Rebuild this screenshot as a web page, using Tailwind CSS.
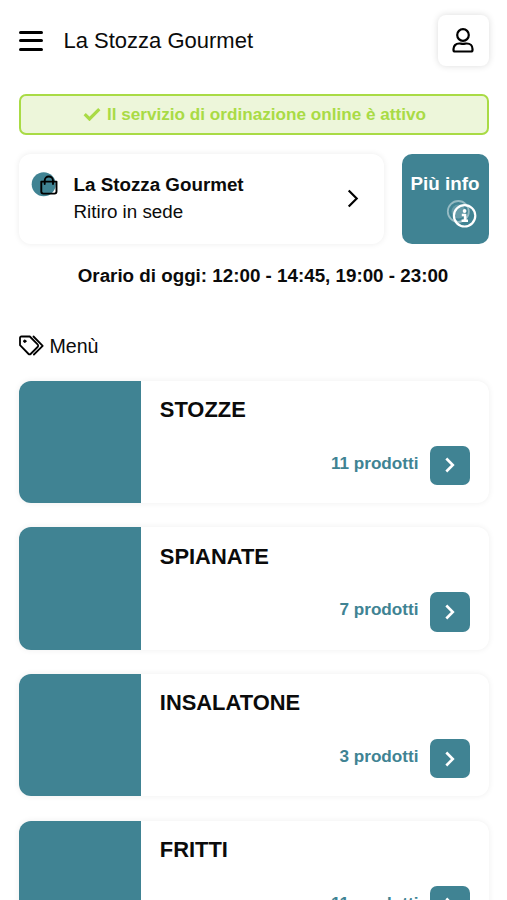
<!DOCTYPE html>
<html lang="it">
<head>
<meta charset="utf-8">
<meta name="viewport" content="width=device-width, initial-scale=1">
<title>La Stozza Gourmet</title>
<script src="https://cdn.jsdelivr.net/npm/@tailwindcss/browser@4"></script>
</head>
<body class="h-[900px] overflow-hidden bg-white font-['Liberation_Sans',Arial,sans-serif] text-[#0b0b0b]">
<div class="pl-[19px] pr-[18px]">
  <header class="flex h-[94px] items-start pt-[15px]">
    <button class="mt-[16px] flex w-6 flex-col gap-[5.6px]" aria-label="Apri menù">
      <span class="h-[2.8px] w-full rounded-full bg-black"></span>
      <span class="h-[2.8px] w-full rounded-full bg-black"></span>
      <span class="h-[2.8px] w-full rounded-full bg-black"></span>
    </button>
    <h1 class="ml-[20.5px] mt-[10px] text-[22px] leading-8 whitespace-nowrap">La Stozza Gourmet</h1>
    <button class="ml-auto flex h-[51px] w-[51px] items-center justify-center rounded-[8px] bg-white pr-px shadow-[0_0_7px_rgba(0,0,0,0.14)]" aria-label="Profilo">
      <svg class="h-[26px] w-[22px]" viewBox="0 0 22 26" fill="none" stroke="#000" stroke-width="2.2" stroke-linejoin="round"><circle cx="11" cy="7" r="5.800"/><path d="M7.200 15.500C3.700 15.500 1.500 18 1.500 21v1c0 1 .6 1.500 1.500 1.500h16c.9 0 1.500-.5 1.500-1.500v-1c0-3-2.200-5.500-5.700-5.500-1.300 0-2.100.3-3.800.3s-2.500-.3-3.800-.3Z"/></svg>
    </button>
  </header>

  <div class="flex h-[41px] items-center justify-center gap-[6px] rounded-[7px] border-2 border-[#a9db45] bg-[#edf6da] pl-px text-[17.15px] font-bold text-[#a9db45]">
    <svg class="h-[13px] w-[18px]" viewBox="0 0 17 13" fill="none" stroke="currentColor" stroke-width="3.200"><path d="M1.200 6.200 6 11 15.800 1.200"/></svg>
    <span class="-mt-px whitespace-nowrap leading-5">Il servizio di ordinazione online è attivo</span>
  </div>

  <div class="mt-[19px] flex gap-[18px]">
    <a class="flex h-[90px] w-[365px] items-start rounded-[12px] bg-white pl-[12px] pr-[25px] shadow-[0_0_6px_rgba(0,0,0,0.08)]">
      <svg class="mt-[17px] h-[27px] w-[28px] shrink-0" viewBox="0 0 28 27" fill="none"><circle cx="12.700" cy="13.200" r="12" fill="#408393"/><path d="M10.300 10.600h15.200v10a2 2 0 0 1-2 2H12.300a2 2 0 0 1-2-2Z" stroke="#000" stroke-width="1.900" stroke-linejoin="round"/><path d="M13.700 13V9.700a4.150 4.150 0 0 1 8.300 0V13" stroke="#000" stroke-width="1.900" stroke-linecap="round"/></svg>
      <div class="ml-[14.5px] mt-[17px] text-[18.800px] leading-[27px] whitespace-nowrap">
        <div class="font-bold">La Stozza Gourmet</div>
        <div>Ritiro in sede</div>
      </div>
      <svg class="ml-auto mt-[35px] h-[19px] w-[12px]" viewBox="0 0 12 19" fill="none" stroke="#000" stroke-width="2.200"><path d="m1.700 1.500 8 8-8 8"/></svg>
    </a>
    <a class="flex h-[90px] w-[87px] flex-col rounded-[10px] bg-[#408393] pt-[16px] text-white">
      <span class="self-center pr-px text-[18.800px] font-bold leading-[27px] whitespace-nowrap">Più info</span>
      <svg class="ml-[44px] mt-px h-[32px] w-[32px]" viewBox="0 0 32 32" fill="none"><circle cx="12.300" cy="13.500" r="10.500" stroke="#fff" stroke-opacity=".45" stroke-width="1.800"/><circle cx="12.500" cy="13.500" r="7" fill="#fff" fill-opacity=".2"/><circle cx="18.600" cy="17.800" r="10.700" stroke="#fff" stroke-width="2.200"/><circle cx="18.600" cy="13" r="1.900" fill="#fff"/><path d="M15.800 17h3.300v5.700M15.600 22.700h6.400" stroke="#fff" stroke-width="2.600"/></svg>
    </a>
  </div>

  <p class="mt-[18px] pl-[18px] text-center text-[18.800px] font-bold leading-[27px] whitespace-nowrap">Orario di oggi: 12:00 - 14:45, 19:00 - 23:00</p>

  <h2 class="mt-[43px] flex h-[28px] items-center gap-[4.5px] text-[19.6px] leading-7">
    <svg class="-mt-[2px] h-[21px] w-[26px]" viewBox="0 0 26 21" fill="none" stroke="#000" stroke-width="1.800" stroke-linejoin="round" stroke-linecap="round"><path d="M1 3v7.200L9.600 19a1.400 1.400 0 0 0 2 0l7-7a1.800 1.800 0 0 0 0-2.600L10.800 1.500H2.500C1.500 1.500 1 2 1 3Z"/><path d="m14.500 1.500 9.200 9.300-8.800 8.700"/><circle cx="5.800" cy="6.200" r="1.200" fill="#000" stroke-width="1"/></svg>
    <span>Menù</span>
  </h2>

  <main class="mt-[20.500px] flex flex-col gap-[24.200px]">
    <a class="flex h-[122.500px] shrink-0 overflow-hidden rounded-[12px] bg-white shadow-[0_0_6px_rgba(0,0,0,0.07)]">
      <div class="w-[122.300px] bg-[#408393]"></div>
      <div class="flex flex-1 flex-col justify-between pb-[18px] pl-[18.500px] pr-[19px] pt-[14.400px]">
        <h3 class="text-[21.900px] font-bold leading-[30px]">STOZZE</h3>
        <div class="flex items-center justify-end gap-[11.500px]"><span class="-mt-[3.400px] text-[17.150px] font-bold text-[#408393]">11 prodotti</span><span class="flex h-[39.500px] w-[40px] items-center justify-center rounded-[7px] bg-[#408393]"><svg class="h-4 w-[10px]" viewBox="0 0 10 16" fill="none" stroke="#fff" stroke-width="2.600"><path d="m1.300 1.500 6.500 6.500-6.500 6.500"/></svg></span></div>
      </div>
    </a>
    <a class="flex h-[122.500px] shrink-0 overflow-hidden rounded-[12px] bg-white shadow-[0_0_6px_rgba(0,0,0,0.07)]">
      <div class="w-[122.300px] bg-[#408393]"></div>
      <div class="flex flex-1 flex-col justify-between pb-[18px] pl-[18.500px] pr-[19px] pt-[14.400px]">
        <h3 class="text-[21.900px] font-bold leading-[30px]">SPIANATE</h3>
        <div class="flex items-center justify-end gap-[11.500px]"><span class="-mt-[3.400px] text-[17.150px] font-bold text-[#408393]">7 prodotti</span><span class="flex h-[39.500px] w-[40px] items-center justify-center rounded-[7px] bg-[#408393]"><svg class="h-4 w-[10px]" viewBox="0 0 10 16" fill="none" stroke="#fff" stroke-width="2.600"><path d="m1.300 1.500 6.500 6.500-6.500 6.500"/></svg></span></div>
      </div>
    </a>
    <a class="flex h-[122.500px] shrink-0 overflow-hidden rounded-[12px] bg-white shadow-[0_0_6px_rgba(0,0,0,0.07)]">
      <div class="w-[122.300px] bg-[#408393]"></div>
      <div class="flex flex-1 flex-col justify-between pb-[18px] pl-[18.500px] pr-[19px] pt-[14.400px]">
        <h3 class="text-[21.900px] font-bold leading-[30px]">INSALATONE</h3>
        <div class="flex items-center justify-end gap-[11.500px]"><span class="-mt-[3.400px] text-[17.150px] font-bold text-[#408393]">3 prodotti</span><span class="flex h-[39.500px] w-[40px] items-center justify-center rounded-[7px] bg-[#408393]"><svg class="h-4 w-[10px]" viewBox="0 0 10 16" fill="none" stroke="#fff" stroke-width="2.600"><path d="m1.300 1.500 6.500 6.500-6.500 6.500"/></svg></span></div>
      </div>
    </a>
    <a class="flex h-[122.500px] shrink-0 overflow-hidden rounded-[12px] bg-white shadow-[0_0_6px_rgba(0,0,0,0.07)]">
      <div class="w-[122.300px] bg-[#408393]"></div>
      <div class="flex flex-1 flex-col justify-between pb-[18px] pl-[18.500px] pr-[19px] pt-[14.400px]">
        <h3 class="text-[21.900px] font-bold leading-[30px]">FRITTI</h3>
        <div class="flex items-center justify-end gap-[11.500px]"><span class="-mt-[3.400px] text-[17.150px] font-bold text-[#408393]">11 prodotti</span><span class="flex h-[39.500px] w-[40px] items-center justify-center rounded-[7px] bg-[#408393]"><svg class="h-4 w-[10px]" viewBox="0 0 10 16" fill="none" stroke="#fff" stroke-width="2.600"><path d="m1.300 1.500 6.500 6.500-6.500 6.500"/></svg></span></div>
      </div>
    </a>
  </main>
</div>
</body>
</html>
